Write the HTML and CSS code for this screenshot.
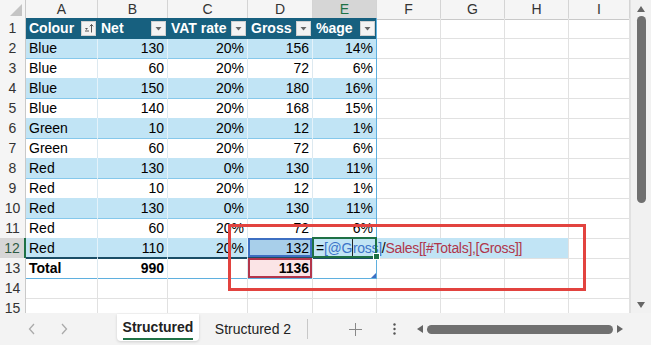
FILE: index.html
```html
<!DOCTYPE html>
<html>
<head>
  <title>Structured</title>
  <link rel="stylesheet" href="styles.css">
</head>
<body>
  <div class="workbook">
    <div class="main">
      <div class="grid">
        <div class="row colhead">
          <div class="corner"><svg width="12" height="12" viewBox="0 0 12 12"><polygon points="12,0 12,12 0,12" fill="#c4c4c4"/></svg></div>
          <div class="ch">A</div><div class="ch">B</div><div class="ch">C</div><div class="ch">D</div>
          <div class="ch sel">E</div><div class="ch">F</div><div class="ch">G</div><div class="ch">H</div><div class="ch">I</div>
        </div>

        <div class="row">
          <div class="rh">1</div>
          <div class="c hd">Colour<span class="dd"><svg width="13" height="13" viewBox="0 0 13 13"><path d="M3 6h3l-1.5 2z" fill="#555"/><path d="M3 9h4" stroke="#555"/><path d="M9.5 2.5v8M7.8 4.3l1.7-1.8 1.7 1.8" stroke="#555" fill="none"/></svg></span></div>
          <div class="c hd">Net<span class="dd"><svg width="13" height="13" viewBox="0 0 13 13"><path d="M3.5 5h6l-3 3.5z" fill="#666"/></svg></span></div>
          <div class="c hd">VAT rate<span class="dd"><svg width="13" height="13" viewBox="0 0 13 13"><path d="M3.5 5h6l-3 3.5z" fill="#666"/></svg></span></div>
          <div class="c hd">Gross<span class="dd"><svg width="13" height="13" viewBox="0 0 13 13"><path d="M3.5 5h6l-3 3.5z" fill="#666"/></svg></span></div>
          <div class="c hd last">%age<span class="dd"><svg width="13" height="13" viewBox="0 0 13 13"><path d="M3.5 5h6l-3 3.5z" fill="#666"/></svg></span></div>
          <div class="c"></div><div class="c"></div><div class="c"></div><div class="c"></div>
        </div>

        <div class="row band">
          <div class="rh">2</div>
          <div class="c t">Blue</div><div class="c t n">130</div><div class="c t n">20%</div><div class="c t n">156</div><div class="c t n last">14%</div>
          <div class="c"></div><div class="c"></div><div class="c"></div><div class="c"></div>
        </div>
        <div class="row">
          <div class="rh">3</div>
          <div class="c t">Blue</div><div class="c t n">60</div><div class="c t n">20%</div><div class="c t n">72</div><div class="c t n last">6%</div>
          <div class="c"></div><div class="c"></div><div class="c"></div><div class="c"></div>
        </div>
        <div class="row band">
          <div class="rh">4</div>
          <div class="c t">Blue</div><div class="c t n">150</div><div class="c t n">20%</div><div class="c t n">180</div><div class="c t n last">16%</div>
          <div class="c"></div><div class="c"></div><div class="c"></div><div class="c"></div>
        </div>
        <div class="row">
          <div class="rh">5</div>
          <div class="c t">Blue</div><div class="c t n">140</div><div class="c t n">20%</div><div class="c t n">168</div><div class="c t n last">15%</div>
          <div class="c"></div><div class="c"></div><div class="c"></div><div class="c"></div>
        </div>
        <div class="row band">
          <div class="rh">6</div>
          <div class="c t">Green</div><div class="c t n">10</div><div class="c t n">20%</div><div class="c t n">12</div><div class="c t n last">1%</div>
          <div class="c"></div><div class="c"></div><div class="c"></div><div class="c"></div>
        </div>
        <div class="row">
          <div class="rh">7</div>
          <div class="c t">Green</div><div class="c t n">60</div><div class="c t n">20%</div><div class="c t n">72</div><div class="c t n last">6%</div>
          <div class="c"></div><div class="c"></div><div class="c"></div><div class="c"></div>
        </div>
        <div class="row band">
          <div class="rh">8</div>
          <div class="c t">Red</div><div class="c t n">130</div><div class="c t n">0%</div><div class="c t n">130</div><div class="c t n last">11%</div>
          <div class="c"></div><div class="c"></div><div class="c"></div><div class="c"></div>
        </div>
        <div class="row">
          <div class="rh">9</div>
          <div class="c t">Red</div><div class="c t n">10</div><div class="c t n">20%</div><div class="c t n">12</div><div class="c t n last">1%</div>
          <div class="c"></div><div class="c"></div><div class="c"></div><div class="c"></div>
        </div>
        <div class="row band">
          <div class="rh">10</div>
          <div class="c t">Red</div><div class="c t n">130</div><div class="c t n">0%</div><div class="c t n">130</div><div class="c t n last">11%</div>
          <div class="c"></div><div class="c"></div><div class="c"></div><div class="c"></div>
        </div>
        <div class="row">
          <div class="rh">11</div>
          <div class="c t">Red</div><div class="c t n">60</div><div class="c t n">20%</div><div class="c t n">72</div><div class="c t n last">6%</div>
          <div class="c"></div><div class="c"></div><div class="c"></div><div class="c"></div>
        </div>
        <div class="row band active-row">
          <div class="rh sel">12</div>
          <div class="c t">Red</div><div class="c t n">110</div><div class="c t n">20%</div><div class="c t n ref-blue">132</div>
          <div class="c t last edit">
            <div class="editor">=<span class="r-blue">[@G<i class="caret"></i>ross]</span>/<span class="r-red">Sales[[#Totals],[Gross]]</span></div>
            <span class="handle"></span>
          </div>
          <div class="c"></div><div class="c"></div><div class="c"></div><div class="c"></div>
        </div>
        <div class="row total">
          <div class="rh">13</div>
          <div class="c t b">Total</div><div class="c t n b">990</div><div class="c t n"></div><div class="c t n b ref-red">1136</div>
          <div class="c t last"><span class="resize"></span></div>
          <div class="c"></div><div class="c"></div><div class="c"></div><div class="c"></div>
        </div>
        <div class="row">
          <div class="rh">14</div>
          <div class="c"></div><div class="c"></div><div class="c"></div><div class="c"></div><div class="c"></div>
          <div class="c"></div><div class="c"></div><div class="c"></div><div class="c"></div>
        </div>
        <div class="row">
          <div class="rh">15</div>
          <div class="c"></div><div class="c"></div><div class="c"></div><div class="c"></div><div class="c"></div>
          <div class="c"></div><div class="c"></div><div class="c"></div><div class="c"></div>
        </div>

        <div class="callout"></div>
      </div>

      <div class="vscroll">
        <svg class="arrow" width="10" height="8" viewBox="0 0 10 8"><path d="M1 7h8L5 1z" fill="#666"/></svg>
        <div class="vthumb"></div>
        <div class="spacer"></div>
        <svg class="arrow" width="10" height="8" viewBox="0 0 10 8"><path d="M1 1h8L5 7z" fill="#666"/></svg>
      </div>
    </div>

    <div class="tabbar">
      <div class="nav">
        <svg width="8" height="12" viewBox="0 0 8 12"><path d="M6 1L1.5 6 6 11" stroke="#aaa" stroke-width="1.3" fill="none"/></svg>
        <svg width="8" height="12" viewBox="0 0 8 12"><path d="M2 1l4.5 5L2 11" stroke="#aaa" stroke-width="1.3" fill="none"/></svg>
      </div>
      <div class="tab active"><span>Structured</span></div>
      <div class="tab">Structured 2</div>
      <div class="sep"></div>
      <div class="plus"><svg width="13" height="13" viewBox="0 0 13 13"><path d="M6.5 0v13M0 6.5h13" stroke="#888" stroke-width="1"/></svg></div>
      <div class="more"><svg width="3" height="12" viewBox="0 0 3 12"><circle cx="1.5" cy="1.5" r="1.2" fill="#555"/><circle cx="1.5" cy="6" r="1.2" fill="#555"/><circle cx="1.5" cy="10.5" r="1.2" fill="#555"/></svg></div>
      <div class="hscroll">
        <svg width="8" height="10" viewBox="0 0 8 10"><path d="M7 1v8L1 5z" fill="#666"/></svg>
        <div class="hthumb"></div>
        <svg width="8" height="10" viewBox="0 0 8 10"><path d="M1 1v8l6-4z" fill="#666"/></svg>
      </div>
    </div>
  </div>
</body>
</html>
```

FILE: styles.css
```css
body {
  margin: 0;
  padding: 0;
  font-family: "Liberation Sans", Arial, sans-serif;
  font-size: 14px;
  color: #000;
  background-color: #fff;
  overflow: hidden;
}

.workbook {
  width: 651px;
  height: 345px;
  display: flex;
  flex-direction: column;
}

.main {
  display: flex;
  height: 313px;
  overflow: hidden;
}

.grid {
  position: relative;
  width: 630px;
}

.row {
  display: grid;
  grid-template-columns: 26px 72px 70px 80px 65px 64px 64px 64px 64px 61px;
  height: 20px;
}

.row > div {
  box-sizing: border-box;
  white-space: nowrap;
  line-height: 20px;
}

/* headers */
.colhead {
  height: 18px;
}

.colhead > div {
  line-height: 18px;
}

.corner {
  background-color: #f5f5f5;
  border-right: 1px solid #c9c9c9;
  border-bottom: 1px solid #c9c9c9;
  display: flex;
  align-items: flex-end;
  justify-content: flex-end;
  padding: 0 3px 3px 0;
}

.ch {
  background-color: #f5f5f5;
  text-align: center;
  color: #333;
  border-right: 1px solid #d4d4d4;
  border-bottom: 1px solid #c9c9c9;
}

.ch.sel {
  background-color: #d6d6d6;
  color: #1e7145;
  border-bottom: 2px solid #1e7145;
}

.rh {
  background-color: #f5f5f5;
  text-align: center;
  color: #333;
  border-right: 1px solid #c9c9c9;
  border-bottom: 1px solid #dcdcdc;
}

.rh.sel {
  background-color: #d6d6d6;
  color: #2f5a44;
  border-right: 2px solid #1e7145;
}

/* cells */
.c {
  border-right: 1px solid #e1e1e1;
  border-bottom: 1px solid #e1e1e1;
  padding: 0 3px;
  overflow: hidden;
}

.hd {
  position: relative;
  background-color: #17607f;
  color: #fff;
  font-weight: bold;
  border-right-color: #17607f;
  border-bottom: none;
}

.dd {
  position: absolute;
  right: 1px;
  top: 3px;
  width: 15px;
  height: 15px;
  background-color: #f3f3f3;
  border: 1px solid #d0d0d0;
  box-sizing: border-box;
  display: flex;
  align-items: center;
  justify-content: center;
}

.t {
  border-bottom: 1px solid #86c8eb;
  border-right-color: #dde9f0;
}

.band .t {
  background-color: #c1e4f5;
  border-right-color: #e4f2fa;
}

.n {
  text-align: right;
}

.b {
  font-weight: bold;
}

.t.last, .hd.last {
  border-right: 1px solid #5fb0df;
}

.active-row .t {
  border-bottom: 2px solid #1b4d66;
}

.total .t {
  border-bottom: 1px solid #5fb0df;
}

.ref-blue {
  box-shadow: inset 0 0 0 2px #3e6fc2;
}

.band .ref-blue {
  background-color: #a8cfea;
}

.ref-red {
  background-color: #fbe4e6;
  box-shadow: inset 0 0 0 2px #b3364b;
}

/* in-cell editing */
.edit {
  position: relative;
  overflow: visible;
}

.editor {
  position: absolute;
  left: 0;
  top: 0;
  width: 255px;
  height: 20px;
  padding-left: 3px;
  box-sizing: border-box;
  background-color: #c1e4f5;
  line-height: 20px;
  font-size: 14px;
  letter-spacing: -0.3px;
  z-index: 1;
}

.edit::after {
  content: "";
  position: absolute;
  left: -1px;
  top: -1px;
  width: 65px;
  height: 21px;
  border: 2px solid #1e7145;
  box-sizing: border-box;
  z-index: 2;
}

.r-blue {
  color: #3c74c9;
}

.r-red {
  color: #b0364b;
}

.caret {
  display: inline-block;
  width: 1px;
  height: 17px;
  background-color: #222;
  vertical-align: -3px;
}

.handle {
  position: absolute;
  right: -4px;
  bottom: -3px;
  width: 5px;
  height: 5px;
  background-color: #1e7145;
  border: 1px solid #fff;
  z-index: 3;
}

.total .last {
  position: relative;
  overflow: visible;
}

.resize {
  position: absolute;
  right: 0;
  bottom: 0;
  width: 0;
  height: 0;
  border-left: 5px solid transparent;
  border-bottom: 5px solid #3e6fc2;
}

/* annotation box */
.callout {
  position: absolute;
  left: 228px;
  top: 224px;
  width: 358px;
  height: 67px;
  border: 3px solid #e2433f;
  box-sizing: border-box;
  z-index: 5;
}

/* scrollbars */
.vscroll {
  width: 21px;
  background-color: #f1f1f1;
  border-left: 1px solid #e1e1e1;
  display: flex;
  flex-direction: column;
  align-items: center;
  padding: 5px 0 4px;
  box-sizing: border-box;
}

.vthumb {
  width: 9px;
  height: 187px;
  margin-top: 3px;
  background-color: #707070;
  border-radius: 5px;
}

.spacer {
  flex: 1;
}

.tabbar {
  height: 32px;
  background-color: #f3f3f3;
  display: flex;
  align-items: center;
}

.nav {
  width: 117px;
  display: flex;
  gap: 24px;
  padding-left: 28px;
  box-sizing: border-box;
}

.tab {
  width: 108px;
  text-align: center;
  color: #222;
  height: 27px;
  line-height: 26px;
}

.tab.active {
  width: 82px;
  align-self: flex-start;
  margin-top: 1px;
  background-color: #fff;
  font-weight: bold;
  box-shadow: 0 1px 3px rgba(0, 0, 0, 0.15);
  border-radius: 0 0 4px 4px;
}

.tab.active span {
  display: inline-block;
  line-height: 22px;
  border-bottom: 2px solid #1e7145;
}

.sep {
  width: 1px;
  height: 20px;
  background-color: #c8c8c8;
}

.plus {
  margin-left: 41px;
  display: flex;
}

.more {
  margin-left: 31px;
  display: flex;
}

.hscroll {
  margin-left: 20px;
  width: 212px;
  display: flex;
  align-items: center;
  gap: 3px;
}

.hthumb {
  width: 186px;
  height: 9px;
  background-color: #707070;
  border-radius: 5px;
}
```
